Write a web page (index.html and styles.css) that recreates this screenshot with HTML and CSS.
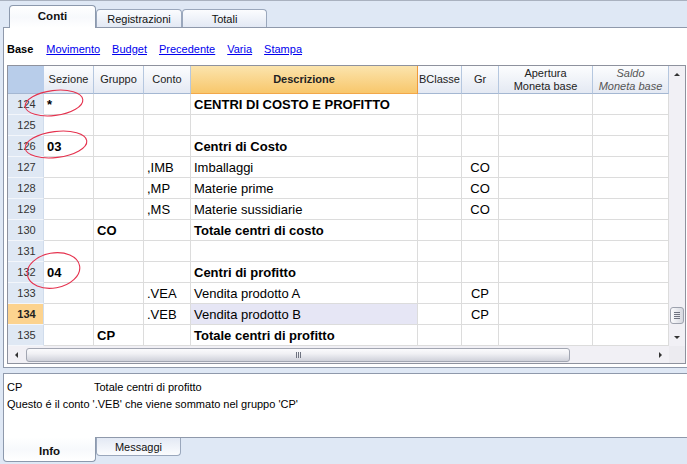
FILE: index.html
```html
<!DOCTYPE html>
<html>
<head>
<meta charset="utf-8">
<link rel="stylesheet" href="styles.css">
</head>
<body>
<div class="toptabs">
  <div class="tab active t1">Conti</div>
  <div class="tab t2">Registrazioni</div>
  <div class="tab t3">Totali</div>
</div>
<div class="panel">
  <div class="views">
    <b>Base</b><a href="#">Movimento</a><a href="#">Budget</a><a href="#">Precedente</a><a href="#">Varia</a><a href="#">Stampa</a>
  </div>
  <div class="grid">
    <div class="gmain">
      <div class="table">
        <div class="c h corner"></div>
        <div class="c h">Sezione</div>
        <div class="c h">Gruppo</div>
        <div class="c h">Conto</div>
        <div class="c h desc">Descrizione</div>
        <div class="c h">BClasse</div>
        <div class="c h">Gr</div>
        <div class="c h">Apertura<br>Moneta base</div>
        <div class="c h it">Saldo<br>Moneta base</div>

        <div class="c rh">124</div><div class="c b">*</div><div class="c"></div><div class="c"></div><div class="c b">CENTRI DI COSTO E PROFITTO</div><div class="c"></div><div class="c"></div><div class="c"></div><div class="c"></div>
        <div class="c rh">125</div><div class="c"></div><div class="c"></div><div class="c"></div><div class="c"></div><div class="c"></div><div class="c"></div><div class="c"></div><div class="c"></div>
        <div class="c rh">126</div><div class="c b">03</div><div class="c"></div><div class="c"></div><div class="c b">Centri di Costo</div><div class="c"></div><div class="c"></div><div class="c"></div><div class="c"></div>
        <div class="c rh">127</div><div class="c"></div><div class="c"></div><div class="c">,IMB</div><div class="c">Imballaggi</div><div class="c"></div><div class="c ctr">CO</div><div class="c"></div><div class="c"></div>
        <div class="c rh">128</div><div class="c"></div><div class="c"></div><div class="c">,MP</div><div class="c">Materie prime</div><div class="c"></div><div class="c ctr">CO</div><div class="c"></div><div class="c"></div>
        <div class="c rh">129</div><div class="c"></div><div class="c"></div><div class="c">,MS</div><div class="c">Materie sussidiarie</div><div class="c"></div><div class="c ctr">CO</div><div class="c"></div><div class="c"></div>
        <div class="c rh">130</div><div class="c"></div><div class="c b">CO</div><div class="c"></div><div class="c b">Totale centri di costo</div><div class="c"></div><div class="c"></div><div class="c"></div><div class="c"></div>
        <div class="c rh">131</div><div class="c"></div><div class="c"></div><div class="c"></div><div class="c"></div><div class="c"></div><div class="c"></div><div class="c"></div><div class="c"></div>
        <div class="c rh">132</div><div class="c b">04</div><div class="c"></div><div class="c"></div><div class="c b">Centri di profitto</div><div class="c"></div><div class="c"></div><div class="c"></div><div class="c"></div>
        <div class="c rh">133</div><div class="c"></div><div class="c"></div><div class="c">.VEA</div><div class="c">Vendita prodotto A</div><div class="c"></div><div class="c ctr">CP</div><div class="c"></div><div class="c"></div>
        <div class="c rh cur">134</div><div class="c"></div><div class="c"></div><div class="c">.VEB</div><div class="c curdesc">Vendita prodotto B</div><div class="c"></div><div class="c ctr">CP</div><div class="c"></div><div class="c"></div>
        <div class="c rh">135</div><div class="c"></div><div class="c b">CP</div><div class="c"></div><div class="c b">Totale centri di profitto</div><div class="c"></div><div class="c"></div><div class="c"></div><div class="c"></div>
      </div>
      <div class="vs">
        <div class="sbtn"><span class="tri up"></span></div>
        <div class="vthumb"><span></span><span></span><span></span><span></span></div>
        <div class="fill"></div>
        <div class="sbtn"><span class="tri down"></span></div>
      </div>
    </div>
    <div class="hs">
      <div class="hbtn"><span class="tri left"></span></div>
      <div class="hthumb"><span></span><span></span><span></span></div>
      <div class="fill"></div>
      <div class="hbtn"><span class="tri right"></span></div>
      <div class="corner2"></div>
    </div>
  </div>
</div>
<div class="info">
  <div class="irow"><span class="k">CP</span><span>Totale centri di profitto</span></div>
  <div class="irow">Questo é il conto '.VEB' che viene sommato nel gruppo 'CP'</div>
</div>
<div class="bottabs">
  <div class="btab active">Info</div>
  <div class="btab">Messaggi</div>
</div>
<svg class="marks" width="687" height="464" viewBox="0 0 687 464">
  <ellipse cx="54" cy="102" rx="29" ry="12.5" transform="rotate(-7 54 102)"/>
  <ellipse cx="56" cy="143.5" rx="31" ry="13" transform="rotate(-7 56 143.5)"/>
  <ellipse cx="53.5" cy="269.5" rx="26.5" ry="17.5" transform="rotate(-10 53.5 269.5)"/>
</svg>
</body>
</html>
```
FILE: styles.css
```css
html, body { margin: 0; padding: 0; }
body {
  width: 687px;
  height: 464px;
  overflow: hidden;
  box-sizing: border-box;
  background: #dfe8f5;
  border-top: 1px solid #a9b1bf;
  font-family: "Liberation Sans", Arial, sans-serif;
  color: #000;
  position: relative;
}

/* top tabs */
.toptabs {
  display: flex;
  align-items: flex-end;
  height: 26px;
  padding-left: 9px;
}
.tab {
  box-sizing: border-box;
  height: 18px;
  border: 1px solid #9aa7bc;
  border-bottom: none;
  border-radius: 4px 4px 0 0;
  background: linear-gradient(#fbfcfe, #e3e9f4);
  font-size: 11px;
  color: #111;
  display: flex;
  align-items: center;
  justify-content: center;
}
.tab.active {
  height: 23px;
  margin-bottom: -1px;
  background: linear-gradient(#ffffff, #f7f9fc 50%, #ffffff);
  border-color: #8c99ad;
  font-weight: bold;
  font-size: 11.5px;
  position: relative;
  z-index: 1;
  padding-bottom: 2px;
}
.t1 { width: 87px; }
.t2 { width: 86px; }
.t3 { width: 85px; }

/* main panel */
.panel {
  margin-left: 3px;
  width: 700px;
  box-sizing: border-box;
  background: #fff;
  border: 1px solid #8f99ab;
  padding-bottom: 3px;
}
.views {
  height: 37px;
  box-sizing: border-box;
  padding: 5px 0 0 3px;
  display: flex;
  align-items: center;
  font-size: 11px;
}
.views b { margin-right: 1px; }
.views a {
  color: #0000ee;
  text-decoration: underline;
  margin-left: 12px;
}

/* grid */
.grid {
  margin-left: 3px;
  width: 679px;
  box-sizing: border-box;
  border: 1px solid #8e929e;
}
.gmain {
  display: flex;
  height: 280px;
}
.table {
  display: grid;
  grid-template-columns: 36px 50px 50px 47px 227px 44px 37px 94px 76px;
  grid-template-rows: 28px repeat(12, 21px);
  width: 661px;
}
.c {
  box-sizing: border-box;
  border-right: 1px solid #dcdcdc;
  border-bottom: 1px solid #dcdcdc;
  display: flex;
  align-items: center;
  padding: 0 3px;
  font-size: 13px;
  white-space: nowrap;
  overflow: hidden;
  color: #000;
}
.c.b { font-weight: bold; }
.c.ctr { justify-content: center; padding: 0; }
.c.h {
  font-size: 11px;
  line-height: 13px;
  justify-content: center;
  text-align: center;
  color: #222;
  background: linear-gradient(#fcfdfe, #e4e9f3);
  border-right-color: #b5c7df;
  border-bottom-color: #a4b7d2;
  padding: 0;
}
.c.h.desc {
  font-weight: bold;
  background: linear-gradient(#fbe4ad, #f8c76c);
  border-right-color: #f09a3a;
  border-bottom-color: #f2a84a;
}
.c.h.corner {
  background: #b8cdea;
  border-right-color: #b8cdea;
  border-bottom-color: #a4b7d2;
}
.c.h.it { font-style: italic; color: #555; }
.c.rh {
  font-size: 11px;
  justify-content: center;
  padding: 0 0 0 2px;
  background: #dfe8f4;
  border-bottom-color: #f3f6fb;
  border-right-color: #d0dcec;
  color: #333;
}
.c.rh.cur {
  background: #fcd38f;
  font-weight: bold;
  color: #222;
}
.c.curdesc { background: #e6e6f5; }

/* vertical scrollbar */
.vs {
  width: 16px;
  background: #f1f0f5;
  display: flex;
  flex-direction: column;
  align-items: center;
}
.sbtn {
  height: 17px;
  width: 16px;
  display: flex;
  align-items: center;
  justify-content: center;
}
.fill { flex: 1; }
.vthumb {
  margin-top: 224px;
  width: 14px;
  height: 17px;
  box-sizing: border-box;
  border: 1px solid #9ea2ae;
  border-radius: 3px;
  background: linear-gradient(90deg, #fbfbfd, #d6d8e0);
  display: flex;
  flex-direction: column;
  align-items: center;
  justify-content: center;
  gap: 1px;
}
.vthumb span {
  width: 6px;
  height: 1px;
  background: #6f7380;
}
.tri { width: 0; height: 0; display: block; }
.tri.up { border-left: 3px solid transparent; border-right: 3px solid transparent; border-bottom: 3px solid #333; }
.tri.down { border-left: 3px solid transparent; border-right: 3px solid transparent; border-top: 3px solid #333; }
.tri.left { border-top: 3px solid transparent; border-bottom: 3px solid transparent; border-right: 3px solid #333; }
.tri.right { border-top: 3px solid transparent; border-bottom: 3px solid transparent; border-left: 3px solid #333; }

/* horizontal scrollbar */
.hs {
  display: flex;
  height: 17px;
  align-items: center;
  background: #f1f0f5;
}
.hbtn {
  width: 17px;
  height: 17px;
  display: flex;
  align-items: center;
  justify-content: center;
}
.hthumb {
  margin-left: 1px;
  width: 544px;
  height: 14px;
  box-sizing: border-box;
  border: 1px solid #a2a6b2;
  border-radius: 3px;
  background: linear-gradient(#fbfbfd, #f0f0f4 40%, #cfd1da);
  display: flex;
  align-items: center;
  justify-content: center;
  gap: 1px;
}
.hthumb span {
  width: 1px;
  height: 6px;
  background: #6f7380;
}
.corner2 {
  width: 16px;
  height: 17px;
  background: #ecebf0;
}

/* info panel */
.info {
  margin: 5px 0 0 3px;
  width: 700px;
  height: 65px;
  box-sizing: border-box;
  border: 1px solid #8f99ab;
  background: #fff;
  padding: 5px 0 0 3px;
  font-size: 11px;
  line-height: 17px;
  color: #000;
}
.irow { display: flex; }
.k { width: 87px; }

/* bottom tabs */
.bottabs {
  display: flex;
  align-items: flex-start;
  padding-left: 3px;
}
.btab {
  box-sizing: border-box;
  width: 85px;
  height: 18px;
  border: 1px solid #9aa7bc;
  border-top: none;
  border-radius: 0 0 4px 4px;
  background: linear-gradient(#e3e9f4, #fbfcfe);
  font-size: 11px;
  color: #111;
  display: flex;
  align-items: center;
  justify-content: center;
}
.btab.active {
  width: 93px;
  height: 25px;
  margin-top: -1px;
  padding-top: 3px;
  background: linear-gradient(#ffffff, #f7f9fc 50%, #ffffff);
  border-color: #8c99ad;
  font-weight: bold;
  font-size: 11.5px;
  position: relative;
  z-index: 1;
}

/* annotation overlay */
.marks {
  position: absolute;
  left: 0;
  top: 0;
  pointer-events: none;
}
.marks ellipse {
  fill: none;
  stroke: #e5334f;
  stroke-width: 1.1;
}
```
